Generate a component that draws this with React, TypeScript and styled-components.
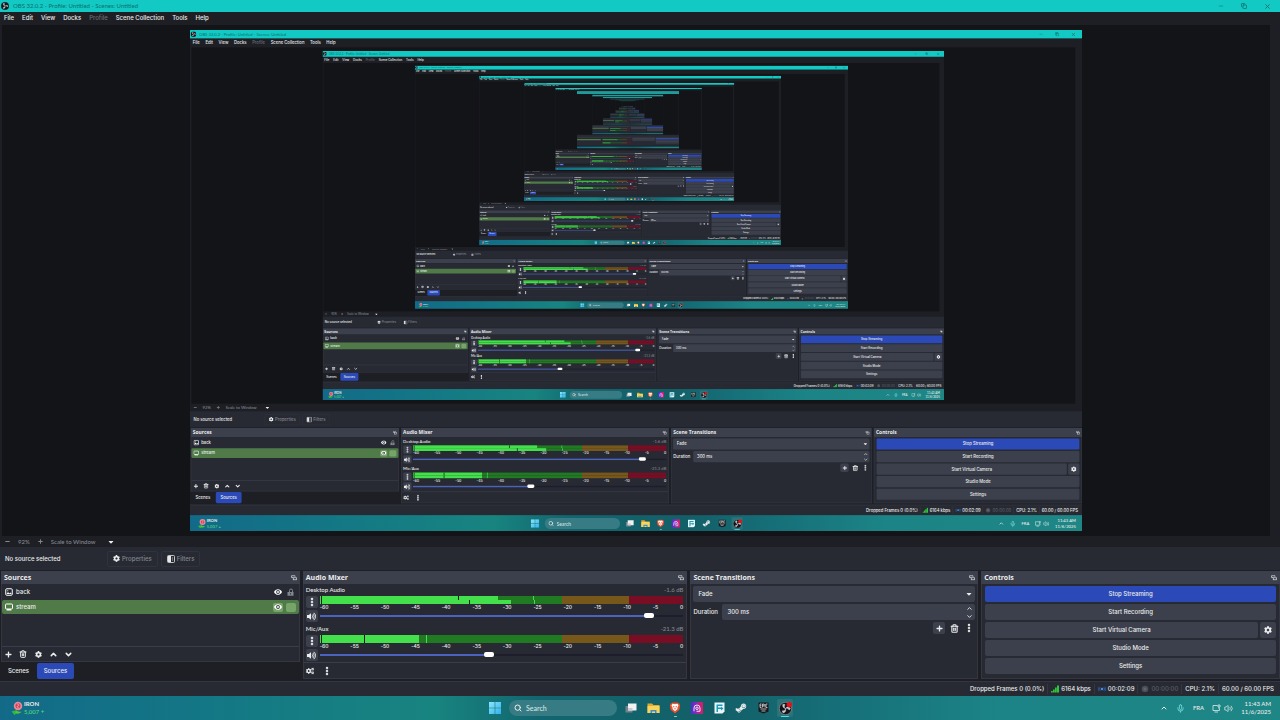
import React, { useId } from 'react';
import styled, { createGlobalStyle, css } from 'styled-components';
import { FaPlus, FaMinus, FaCog, FaCogs, FaVolumeUp, FaCaretDown, FaSteamSymbol } from 'react-icons/fa';
import { ChevronUp, ChevronDown, Trash2, EllipsisVertical, Search, Mic, Volume2, X, Copy, Minus } from 'lucide-react';

const PREVIEW_SCALE = 0.697;
/* From this depth on a capture is too small for text, so only its blocks are drawn. */
const DETAIL_DEPTH = 7;
const MAX_DEPTH = 13;

const color = {
  accent: '#12cac3',
  window: '#1d1f25',
  panel: '#272a33',
  control: '#3c404c',
  canvas: '#131418',
  blue: '#2b4ab8',
  text: '#eceded',
  muted: '#85878e',
};

const GlobalStyle = createGlobalStyle`
  *, *::before, *::after { box-sizing: border-box; }
  body { margin: 0; background: ${color.window}; }
  button, input, select {
    font: inherit; color: inherit; background: none; border: 0; margin: 0; padding: 0;
    min-width: 0; outline: 0; appearance: none;
  }
  svg { display: block; flex: none; }
  ul { list-style: none; margin: 0; padding: 0; }
`;

/* ---------- Desktop shell ---------- */

const DesktopFrame = styled.div`
  display: flex;
  flex-direction: column;
  width: 100%;
  min-height: 100vh;
  overflow: hidden;
  background: ${color.window};
  color: ${color.text};
  font-family: Inter, 'Open Sans', sans-serif;
  font-size: 6px;
  font-weight: 500;
  line-height: 10px;
  white-space: nowrap;
`;

const TitleBar = styled.header<{ $thick?: boolean }>`
  display: flex;
  align-items: center;
  gap: 4px;
  height: ${(p) => (p.$thick ? 38 : 12)}px;
  padding: 0 9px 0 1px;
  background: ${(p) => (p.$thick ? '#1c9c9b' : color.accent)};
  color: #0b6e6f;
`;

const TitleText = styled.span`
  flex: 1;
  font-family: Lato, sans-serif;
  font-size: 6px;
  font-weight: 400;
`;

const WindowButtons = styled.div`
  display: flex;
  gap: 15px;
`;

const WindowButton = styled.button`
  display: grid;
  place-items: center;
  width: 8px;
  height: 10px;
`;

const MenuBar = styled.nav`
  display: flex;
  gap: 8px;
  height: 13px;
  padding: 1px 4px 2px;
`;

const MenuItem = styled.button<{ $dim?: boolean }>`
  color: ${(p) => (p.$dim ? '#6c6e74' : color.text)};
`;

/* ---------- Preview ---------- */

const PreviewRow = styled.main`
  flex: 1;
  display: flex;
  padding: 0 10px 0 2px;
`;

const PreviewCanvas = styled.div`
  flex: 1;
  display: flex;
  align-items: center;
  justify-content: center;
  background: ${color.canvas};
`;

const PreviewSlot = styled.div`
  width: ${PREVIEW_SCALE * 100}vw;
  height: ${PREVIEW_SCALE * 100}vh;
  overflow: hidden;
`;

const CapturedScreen = styled.div`
  width: 100vw;
  height: 100vh;
  transform: scale(${PREVIEW_SCALE});
  transform-origin: 0 0;
`;

const ZoomBar = styled.div`
  display: flex;
  align-items: center;
  gap: 8px;
  height: 11px;
  padding: 0 5px;
  color: ${color.muted};
  font-family: Lato, sans-serif;
`;

const ZoomButton = styled.button`
  display: grid;
  place-items: center;
  width: 5px;
`;

const ScaleSelect = styled.select`
  width: 48px;
`;

const SelectWrap = styled.span`
  display: flex;
  align-items: center;
  gap: 8px;
  & > svg { color: ${color.text}; }
`;

/* ---------- Source context bar ---------- */

const ContextBar = styled.div`
  display: flex;
  align-items: center;
  height: 23px;
  padding: 0 5px;
  background: ${color.panel};
`;

const ContextLabel = styled.span`
  width: 102px;
`;

const ContextButton = styled.button`
  display: flex;
  align-items: center;
  gap: 2px;
  height: 16px;
  margin-right: 3px;
  padding: 0 5px;
  border: 1px solid #30333d;
  border-radius: 2px;
  color: ${color.muted};
  & > svg { color: ${color.text}; }
`;

/* ---------- Docks ---------- */

const DockRow = styled.div`
  display: grid;
  grid-template-columns: 299fr 385fr 288fr 299fr;
  gap: 3px;
  height: 111px;
  padding: 1px 0 3px 1px;
`;

const Dock = styled.section`
  display: flex;
  flex-direction: column;
  min-width: 0;
`;

const DockHeader = styled.h2`
  display: flex;
  align-items: center;
  justify-content: space-between;
  height: 13px;
  margin: 0;
  padding: 0 3px;
  background: ${color.control};
  font-family: 'Open Sans', sans-serif;
  font-size: 7px;
  font-weight: 700;
  line-height: 10px;
`;

const DockBody = styled.div`
  flex: 1;
  display: flex;
  flex-direction: column;
  border: 1px solid #343742;
  border-top: 0;
  background: ${color.panel};
`;

const IconButton = styled.button<{ $raised?: boolean }>`
  display: grid;
  place-items: center;
  width: 12px;
  height: 12px;
  border-radius: 2px;
  ${(p) => p.$raised && css`background: ${color.control};`}
`;

const SourceList = styled.ul`
  flex: 1;
`;

const SourceRow = styled.li<{ $selected?: boolean }>`
  display: flex;
  align-items: center;
  gap: 3px;
  height: 15px;
  padding: 0 3px;
  ${(p) => p.$selected && css`height: 14px; margin-top: 1px; border-radius: 2px; background: #507b49;`}
`;

const SourceName = styled.span`
  flex: 1;
`;

const SourceToggle = styled.button<{ $tint?: boolean }>`
  display: grid;
  place-items: center;
  width: 10px;
  height: 9px;
  border-radius: 2px;
  ${(p) => p.$tint && css`background: #77a468;`}
`;

const SourceTools = styled.div`
  display: flex;
  align-items: center;
  gap: 3px;
  height: 15px;
  border-top: 1px solid #3a3e49;
`;

const Tabs = styled.div`
  display: flex;
  gap: 1px;
  height: 17px;
  padding-top: 1px;
`;

const Tab = styled.button<{ $active?: boolean }>`
  width: ${(p) => (p.$active ? 37 : 35)}px;
  height: 16px;
  border-radius: 2px;
  background: ${(p) => (p.$active ? color.blue : color.window)};
`;

/* ---------- Mixer ---------- */

const Channel = styled.div`
  display: grid;
  grid-template-columns: 12px 1fr;
  column-gap: 2px;
  height: 39px;
  padding: 1px 3px 0 2px;
`;

const ChannelTitle = styled.div`
  grid-column: 1 / -1;
  display: flex;
  justify-content: space-between;
  height: 10px;
  font-family: Lato, sans-serif;
  & > output { color: ${color.muted}; }
`;

const ChannelButtons = styled.div`
  display: flex;
  flex-direction: column;
  gap: 2px;
`;

const Meters = styled.div`
  display: flex;
  flex-direction: column;
  min-width: 0;
`;

const MeterBar = styled.div`
  position: relative;
  height: 4px;
  background: linear-gradient(90deg, #1f7a22 0 66.8%, #77571a 66.8% 85.1%, #780d24 85.1%);
`;

const MeterLevel = styled.div`
  height: 100%;
  background: #44e04c;
`;

const MeterMark = styled.i<{ $dark?: boolean }>`
  position: absolute;
  top: 0;
  width: 1px;
  height: 100%;
  background: ${(p) => (p.$dark ? '#0b1a0c' : '#44e04c')};
`;

const Scale = styled.div`
  display: flex;
  justify-content: space-between;
  height: 7px;
  font-size: 5px;
  line-height: 7px;
`;

const Fader = styled.input`
  width: 100%;
  height: 9px;
  background: center / 100% 2px no-repeat;
  &::-webkit-slider-runnable-track { height: 5px; }
  &::-webkit-slider-thumb {
    appearance: none;
    width: 10px;
    height: 5px;
    border-radius: 2px;
    background: #fff;
  }
`;

const MixerTools = styled.div`
  display: flex;
  align-items: center;
  gap: 5px;
  height: 16px;
  margin-top: auto;
  border-top: 1px solid #3a3e49;
`;

/* ---------- Transitions and controls ---------- */

const Stack = styled.div`
  display: flex;
  flex-direction: column;
  gap: 2px;
  padding: 2px 2px;
`;

const Line = styled.div`
  display: flex;
  gap: 2px;
  & > label { width: 27px; line-height: 16px; }
`;

const Field = styled.div`
  flex: 1 0 auto;
  display: flex;
  align-items: center;
  height: 16px;
  padding: 0 2px 0 5px;
  border-radius: 2px;
  background: ${color.control};
  & > select, & > input { flex: 1; }
`;

const Spinner = styled.span`
  display: flex;
  flex-direction: column;
  gap: 1px;
`;

const TransitionTools = styled.div`
  display: flex;
  justify-content: flex-end;
  gap: 3px;
`;

const ControlStack = styled(Stack)`
  padding: 2px 3px;
`;

const ControlButton = styled.button<{ $primary?: boolean; $square?: boolean }>`
  display: grid;
  place-items: center;
  flex: ${(p) => (p.$square ? '0 0 16px' : '1')};
  height: 16px;
  border-radius: 2px;
  background: ${(p) => (p.$primary ? color.blue : color.control)};
`;

/* ---------- Status bar ---------- */

const StatusBar = styled.footer`
  display: flex;
  justify-content: flex-end;
  height: 15px;
  padding: 2px 3px;
  border-top: 1px solid #343742;
  background: ${color.panel};
`;

const StatusItem = styled.span<{ $dim?: boolean }>`
  display: flex;
  align-items: center;
  gap: 2px;
  padding: 0 3px;
  color: ${(p) => (p.$dim ? '#5b5e68' : color.text)};
  & + & { border-left: 1px solid #343742; }
`;

/* ---------- Taskbar ---------- */

const Taskbar = styled.footer`
  display: grid;
  grid-template-columns: 1fr auto 1fr;
  align-items: center;
  height: 24px;
  padding: 0 9px;
  background: linear-gradient(90deg, #126a88 0%, #147a84 20%, #188480 34%, #12666f 42%, #135f68 56%, #167079 66%, #1c8486 78%, #1f8686 100%);
  font-family: Lato, sans-serif;
`;

const Widget = styled.button`
  display: flex;
  align-items: center;
  gap: 1px;
  padding-left: 2px;
  line-height: 8px;
  text-align: left;
  justify-self: start;
`;

const WidgetLines = styled.span`
  display: flex;
  flex-direction: column;
  & > b { font-weight: 700; }
  & > span { color: #54dc7c; }
`;

const AppRow = styled.div`
  display: flex;
  align-items: center;
  gap: 6px;
`;

const AppButton = styled.button<{ $state?: 'open' | 'active' }>`
  position: relative;
  display: grid;
  place-items: center;
  width: 16px;
  height: 18px;
  border-radius: 2px;
  ${(p) => p.$state === 'active' && css`background: #2b7279;`}
  ${(p) => p.$state && css`
    &::after {
      content: '';
      position: absolute;
      bottom: 0;
      width: ${p.$state === 'active' ? 8 : 3}px;
      height: 1px;
      border-radius: 1px;
      background: ${p.$state === 'active' ? '#4fe0e6' : '#9cc6c8'};
    }
  `}
`;

const SearchBox = styled.label`
  display: flex;
  align-items: center;
  gap: 4px;
  width: 108px;
  height: 16px;
  padding: 0 5px;
  border-radius: 8px;
  background: #377c84;
  font-size: 7px;
  & > input { flex: 1; }
  & > input::placeholder { color: #d5e4e4; opacity: 1; }
`;

const Tray = styled.div`
  display: flex;
  align-items: center;
  justify-content: flex-end;
  gap: 8px;
`;

const TrayPair = styled.span`
  display: flex;
  gap: 3px;
`;

const Clock = styled.time`
  line-height: 8px;
  text-align: right;
`;

/* ---------- Drawings ---------- */

const BLADE = 'M7 4.5c-1 4.2 1.2 7 5 7.4-2.8-1.6-2.6-4.8-.8-7C9.8 4 8.2 3.9 7 4.5z';

const ObsMark = ({ size = 8, live }: { size?: number; live?: boolean }) => (
  <svg width={size} height={size} viewBox="0 0 24 24">
    <circle cx="12" cy="12" r="11.5" fill="#14141a" stroke={live ? '#a9aeb0' : '#14141a'} />
    <g fill="#c9cdd0" stroke="#c9cdd0" strokeWidth=".8">
      <path d={BLADE} />
      <path d={BLADE} transform="rotate(120 12 12)" />
      <path d={BLADE} transform="rotate(240 12 12)" />
    </g>
    {live && <circle cx="19" cy="5" r="5" fill="#e0151b" />}
  </svg>
);

const FloatIcon = () => (
  <svg width="6" height="6" viewBox="0 0 12 12" fill="none" stroke="#d4d5d9" strokeWidth="1.5">
    <path d="M8 3.500V1.500H1V5h3" />
    <rect x="4.500" y="5.500" width="6.500" height="4" />
  </svg>
);

const ImageIcon = () => (
  <svg width="8" height="8" viewBox="0 0 16 16">
    <rect x="1.500" y="1.500" width="13" height="13" rx="2" fill="none" stroke="#fff" strokeWidth="2" />
    <path d="M3 12l3-4 2.500 3L11 9l2.500 3z" fill="#fff" />
    <circle cx="5.500" cy="5.500" r="1.200" fill="#fff" />
  </svg>
);

const MonitorIcon = () => (
  <svg width="8" height="8" viewBox="0 0 16 16">
    <rect x="1" y="2" width="14" height="10" rx="2" fill="none" stroke="#fff" strokeWidth="2" />
    <path d="M4 12h8l1 3H3z" fill="#fff" />
  </svg>
);

const EyeIcon = () => (
  <svg width="8" height="8" viewBox="0 0 16 16">
    <path d="M0 8c3-7.500 13-7.500 16 0-3 7.500-13 7.500-16 0z" fill="#fff" />
    <circle cx="8" cy="8" r="3.800" fill="#3a3e49" />
    <circle cx="8" cy="8" r="1.900" fill="#fff" />
  </svg>
);

const UnlockIcon = () => (
  <svg width="7" height="8" viewBox="0 0 14 16">
    <path d="M5 8V5a3 3 0 0 1 6 0v3" fill="none" stroke="#83858c" strokeWidth="2" />
    <rect x="1" y="8" width="12" height="7.500" fill="#83858c" />
    <path d="M7 10v3" stroke="#272a33" strokeWidth="1.500" />
  </svg>
);

const FilterIcon = () => (
  <svg width="8" height="8" viewBox="0 0 16 16">
    <rect x="1" y="1" width="14" height="14" rx="2" fill="none" stroke="#e8e8ea" strokeWidth="1.600" />
    <path d="M2 2h6v12H2z" fill="#e8e8ea" />
    <path d="M11 4v8" stroke="#85878e" strokeWidth="1.500" />
  </svg>
);

const SignalIcon = () => (
  <svg width="8" height="8" viewBox="0 0 16 16" fill="#2fc43a">
    <path d="M0 12h3.500v3H0zM4 9h3.500v6H4zM8 5h3.500v10H8zM12 1h4v14h-4z" />
  </svg>
);

const StreamIcon = () => (
  <svg width="8" height="8" viewBox="0 0 16 16">
    <circle cx="8" cy="8" r="2.500" fill="#4a8de8" />
    <path d="M4.500 4.500a5 5 0 0 0 0 7M11.500 4.500a5 5 0 0 1 0 7M2 3.500a8 8 0 0 0 0 9M14 3.500a8 8 0 0 1 0 9" fill="none" stroke="#2b5fae" strokeWidth="1.600" />
  </svg>
);

const RecordIcon = () => (
  <svg width="8" height="8" viewBox="0 0 16 16">
    <circle cx="8" cy="8" r="6.500" fill="#4c4f59" />
    <circle cx="8" cy="8" r="3" fill="#60636d" />
  </svg>
);

const RoseIcon = () => (
  <svg width="12" height="14" viewBox="0 0 24 28">
    <path d="M1 21l7-2 4 5-5 4z" fill="#37b53f" />
    <path d="M9 17c3 4 7 5 12 4-2 4-8 6-12 3z" fill="#4dc936" />
    <circle cx="14" cy="10" r="8.500" fill="#e8889a" />
    <circle cx="14" cy="9.500" r="5" fill="#cf4358" />
    <path d="M12 6c4 0 5 3 2 4s-2 3 1 3" stroke="#f4b4bd" strokeWidth="1.500" fill="none" />
  </svg>
);

const StartIcon = () => (
  <svg width="12" height="12" viewBox="0 0 24 24">
    <defs>
      <linearGradient id="start-tile" x1="0" y1="0" x2="1" y2="1">
        <stop offset="0" stopColor="#8be6fb" />
        <stop offset="1" stopColor="#2fb1ee" />
      </linearGradient>
    </defs>
    <path d="M0 0h11.400v11.400H0zM12.600 0H24v11.400H12.600zM0 12.600h11.400V24H0zM12.600 12.600H24V24H12.600z" fill="url(#start-tile)" />
  </svg>
);

const TaskViewIcon = () => (
  <svg width="12" height="12" viewBox="0 0 24 24">
    <path d="M1 8h14v13H1z" fill="#74828a" />
    <path d="M6 3h17v14H6z" fill="#f1f1f1" />
    <path d="M6 12h9v5H6z" fill="#c9cccf" />
  </svg>
);

const FolderIcon = () => (
  <svg width="13" height="12" viewBox="0 0 26 24">
    <path d="M1 3h9l3 3h12v16H1z" fill="#e3a92a" />
    <path d="M1 8h24v14H1z" fill="#f9d45c" />
    <path d="M7 22v-6h12v6h-3v-3h-6v3z" fill="#3f8ccb" />
  </svg>
);

const BraveIcon = () => (
  <svg width="12" height="12" viewBox="0 0 24 24">
    <path d="M7 1h10l2 2.200 2-.2 1.200 4-1.500 8.500L12 23l-8.700-7.500L1.800 7 3 3l2 .2z" fill="#f0502a" />
    <path d="M12 4.500l5-.8 2 3.300-2.500 5 .5 2-5 4.500L7 14l.5-2L5 7l2-3.300z" fill="#fff" />
    <path d="M8 7.500l3 1-1 3 2 2 2-2-1-3 3-1-2 5-2 3-2-3z" fill="#f0502a" />
  </svg>
);

const SwirlIcon = () => (
  <svg width="12" height="12" viewBox="0 0 24 24">
    <defs>
      <linearGradient id="swirl-tile" x1="0" y1="0" x2="1" y2="0">
        <stop offset="0" stopColor="#4331d4" />
        <stop offset=".55" stopColor="#9c2aa8" />
        <stop offset="1" stopColor="#e3195e" />
      </linearGradient>
    </defs>
    <rect width="24" height="24" rx="2" fill="url(#swirl-tile)" />
    <path d="M6 18.500v-6.500a6 6 0 1 1 12 0v6.500h-7" fill="none" stroke="#eee2f7" strokeWidth="2" />
    <circle cx="12" cy="12.500" r="2.500" fill="none" stroke="#eee2f7" strokeWidth="2" />
  </svg>
);

const ShareTileIcon = () => (
  <svg width="11" height="12" viewBox="0 0 22 24">
    <path d="M1 1h20v18l-4 4H1z" fill="#e9f7fa" />
    <path d="M5 5h12v3H8v3h6V9l5 4-5 4v-3H8v6H5z" fill="#1b9cb8" />
  </svg>
);

const EpicIcon = () => (
  <svg width="11" height="12" viewBox="0 0 22 24">
    <path d="M1 1h20v18l-10 4-10-4z" fill="#17191c" />
    <path d="M4 4h3M4 4v7h3M4 7.500h3M9 11V4h3v4H9M14 4v7M19 4h-3v7h3M5 14h12M7 18h8" stroke="#dfe2e3" strokeWidth="1.500" fill="none" />
  </svg>
);

const NetworkIcon = () => (
  <svg width="9" height="9" viewBox="0 0 18 18" fill="none" stroke="#e4f1f1" strokeWidth="1.500">
    <path d="M11 3H2v10h13V9M5 16h7" />
    <path d="M12 2h4v4h-4zM14 6v4" />
  </svg>
);

/* ---------- Parts ---------- */

type MeterData = { level: number; peak: number; hold: number };
type ChannelData = { name: string; db: string; fader: number; meters: MeterData[] };

const CHANNELS: ChannelData[] = [
  {
    name: 'Desktop Audio',
    db: '-1.6 dB',
    fader: 918,
    meters: [
      { level: 49, peak: 38, hold: 58.5 },
      { level: 52.5, peak: 41, hold: 59 },
    ],
  },
  {
    name: 'Mic/Aux',
    db: '-21.3 dB',
    fader: 464,
    meters: [
      { level: 27.3, peak: 12.2, hold: 29.2 },
      { level: 27.3, peak: 12.2, hold: 29.2 },
    ],
  },
];

const MARKS = [-60, -55, -50, -45, -40, -35, -30, -25, -20, -15, -10, -5, 0];

function MeterPair({ data }: { data: MeterData[] }) {
  return (
    <>
      {data.map((m, i) => (
        <MeterBar key={i}>
          <MeterLevel style={{ width: `${m.level}%` }} />
          <MeterMark $dark style={{ left: 1 }} />
          <MeterMark $dark style={{ left: `${m.peak}%` }} />
          <MeterMark style={{ left: `${m.hold}%` }} />
        </MeterBar>
      ))}
    </>
  );
}

function MixerChannel({ data }: { data: ChannelData }) {
  const id = useId();
  return (
    <Channel>
      <ChannelTitle>
        <label htmlFor={id}>{data.name}</label>
        <output>{data.db}</output>
      </ChannelTitle>
      <ChannelButtons>
        <IconButton $raised aria-label={`${data.name} options`}>
          <EllipsisVertical size={10} strokeWidth={4} />
        </IconButton>
        <IconButton $raised aria-label={`Mute ${data.name}`}>
          <FaVolumeUp size={9} />
        </IconButton>
      </ChannelButtons>
      <Meters>
        <MeterPair data={data.meters} />
        <Scale>
          {MARKS.map((m) => (
            <span key={m}>{m}</span>
          ))}
        </Scale>
        <Fader
          id={id}
          type="range"
          min={0}
          max={1000}
          defaultValue={data.fader}
          style={{
            backgroundImage: `linear-gradient(90deg, #4b63bd ${data.fader / 10}%, #1c1f2b ${data.fader / 10}%)`,
          }}
        />
      </Meters>
    </Channel>
  );
}

function DockTitle({ children }: { children: React.ReactNode }) {
  return (
    <DockHeader>
      {children}
      <FloatIcon />
    </DockHeader>
  );
}

function SourcesDock() {
  return (
    <Dock>
      <DockTitle>Sources</DockTitle>
      <DockBody>
        <SourceList>
          <SourceRow>
            <ImageIcon />
            <SourceName>back</SourceName>
            <SourceToggle aria-label="Toggle back visibility"><EyeIcon /></SourceToggle>
            <SourceToggle aria-label="Lock back"><UnlockIcon /></SourceToggle>
          </SourceRow>
          <SourceRow $selected>
            <MonitorIcon />
            <SourceName>stream</SourceName>
            <SourceToggle $tint aria-label="Toggle stream visibility"><EyeIcon /></SourceToggle>
            <SourceToggle $tint aria-label="Lock stream" />
          </SourceRow>
        </SourceList>
        <SourceTools>
          <IconButton aria-label="Add source"><FaPlus size={7} /></IconButton>
          <IconButton aria-label="Remove source"><Trash2 size={8} strokeWidth={3} /></IconButton>
          <IconButton aria-label="Source settings"><FaCog size={7} /></IconButton>
          <IconButton aria-label="Move source up"><ChevronUp size={9} strokeWidth={4} /></IconButton>
          <IconButton aria-label="Move source down"><ChevronDown size={9} strokeWidth={4} /></IconButton>
        </SourceTools>
      </DockBody>
      <Tabs>
        <Tab>Scenes</Tab>
        <Tab $active>Sources</Tab>
      </Tabs>
    </Dock>
  );
}

function MixerDock() {
  return (
    <Dock>
      <DockTitle>Audio Mixer</DockTitle>
      <DockBody>
        {CHANNELS.map((c) => (
          <MixerChannel key={c.name} data={c} />
        ))}
        <MixerTools>
          <IconButton aria-label="Advanced audio settings"><FaCogs size={8} /></IconButton>
          <IconButton aria-label="Mixer menu"><EllipsisVertical size={10} strokeWidth={4} /></IconButton>
        </MixerTools>
      </DockBody>
    </Dock>
  );
}

function TransitionsDock() {
  const id = useId();
  return (
    <Dock>
      <DockTitle>Scene Transitions</DockTitle>
      <DockBody>
        <Stack>
          <Field>
            <select aria-label="Transition">
              <option>Fade</option>
            </select>
            <FaCaretDown size={8} />
          </Field>
          <Line>
            <label htmlFor={id}>Duration</label>
            <Field>
              <input id={id} defaultValue="300 ms" />
              <Spinner>
                <ChevronUp size={7} strokeWidth={3} />
                <ChevronDown size={7} strokeWidth={3} />
              </Spinner>
            </Field>
          </Line>
          <TransitionTools>
            <IconButton $raised aria-label="Add transition"><FaPlus size={7} /></IconButton>
            <IconButton aria-label="Remove transition"><Trash2 size={9} strokeWidth={3} /></IconButton>
            <IconButton aria-label="Transition menu"><EllipsisVertical size={10} strokeWidth={4} /></IconButton>
          </TransitionTools>
        </Stack>
      </DockBody>
    </Dock>
  );
}

function ControlsDock() {
  return (
    <Dock>
      <DockTitle>Controls</DockTitle>
      <DockBody>
        <ControlStack>
          <Line><ControlButton $primary>Stop Streaming</ControlButton></Line>
          <Line><ControlButton>Start Recording</ControlButton></Line>
          <Line>
            <ControlButton>Start Virtual Camera</ControlButton>
            <ControlButton $square aria-label="Virtual camera settings"><FaCog size={8} /></ControlButton>
          </Line>
          <Line><ControlButton>Studio Mode</ControlButton></Line>
          <Line><ControlButton>Settings</ControlButton></Line>
        </ControlStack>
      </DockBody>
    </Dock>
  );
}

function WindowsTaskbar() {
  return (
    <Taskbar>
      <Widget>
        <RoseIcon />
        <WidgetLines>
          <b>IRON</b>
          <span>5,007 +</span>
        </WidgetLines>
      </Widget>
      <AppRow>
        <AppButton aria-label="Start"><StartIcon /></AppButton>
        <SearchBox>
          <Search size={8} strokeWidth={3} />
          <input type="text" placeholder="Search" aria-label="Search" />
        </SearchBox>
        <AppButton aria-label="Task view"><TaskViewIcon /></AppButton>
        <AppButton aria-label="File Explorer"><FolderIcon /></AppButton>
        <AppButton aria-label="Brave" $state="open"><BraveIcon /></AppButton>
        <AppButton aria-label="Recorder"><SwirlIcon /></AppButton>
        <AppButton aria-label="Transfer"><ShareTileIcon /></AppButton>
        <AppButton aria-label="Steam"><FaSteamSymbol size={12} /></AppButton>
        <AppButton aria-label="Epic Games"><EpicIcon /></AppButton>
        <AppButton aria-label="OBS Studio" $state="active"><ObsMark size={13} live /></AppButton>
      </AppRow>
      <Tray>
        <ChevronUp size={8} strokeWidth={3} />
        <Mic size={9} strokeWidth={2} color="#7fe6ea" />
        <span>FRA</span>
        <TrayPair>
          <NetworkIcon />
          <Volume2 size={9} strokeWidth={2} />
        </TrayPair>
        <Clock>
          11:43 AM
          <br />
          11/6/2025
        </Clock>
      </Tray>
    </Taskbar>
  );
}

const MENUS = ['File', 'Edit', 'View', 'Docks', 'Profile', 'Scene Collection', 'Tools', 'Help'];

function Preview({ depth }: { depth: number }) {
  const Next = depth + 1 < DETAIL_DEPTH ? Desktop : Miniature;
  return (
    <PreviewRow>
      <PreviewCanvas>
        <PreviewSlot>
          {depth < MAX_DEPTH && (
            <CapturedScreen>
              <Next depth={depth + 1} />
            </CapturedScreen>
          )}
        </PreviewSlot>
      </PreviewCanvas>
    </PreviewRow>
  );
}

function Miniature({ depth }: { depth: number }) {
  return (
    <DesktopFrame>
      <TitleBar $thick />
      <Preview depth={depth} />
      <ContextBar />
      <DockRow>
        <Dock>
          <DockHeader />
          <DockBody>
            <SourceRow />
            <SourceRow $selected />
          </DockBody>
        </Dock>
        <Dock>
          <DockHeader />
          <DockBody>
            {CHANNELS.map((c) => (
              <Channel key={c.name}>
                <ChannelTitle />
                <ChannelButtons />
                <Meters>
                  <MeterPair data={c.meters} />
                </Meters>
              </Channel>
            ))}
          </DockBody>
        </Dock>
        <Dock>
          <DockHeader />
          <DockBody>
            <Stack>
              <Field />
              <Field />
            </Stack>
          </DockBody>
        </Dock>
        <Dock>
          <DockHeader />
          <DockBody>
            <ControlStack>
              <Line><ControlButton as="div" $primary /></Line>
              <Line><ControlButton as="div" /></Line>
              <Line><ControlButton as="div" /></Line>
              <Line><ControlButton as="div" /></Line>
            </ControlStack>
          </DockBody>
        </Dock>
      </DockRow>
      <StatusBar />
      <Taskbar />
    </DesktopFrame>
  );
}

function Desktop({ depth }: { depth: number }) {
  return (
    <DesktopFrame>
      <TitleBar>
        <ObsMark />
        <TitleText>OBS 32.0.2 - Profile: Untitled - Scenes: Untitled</TitleText>
        <WindowButtons>
          <WindowButton aria-label="Minimize"><Minus size={6} strokeWidth={2} /></WindowButton>
          <WindowButton aria-label="Restore"><Copy size={6} strokeWidth={3} /></WindowButton>
          <WindowButton aria-label="Close"><X size={7} strokeWidth={3} /></WindowButton>
        </WindowButtons>
      </TitleBar>
      <MenuBar>
        {MENUS.map((m) => (
          <MenuItem key={m} $dim={m === 'Profile'}>{m}</MenuItem>
        ))}
      </MenuBar>
      <Preview depth={depth} />
      <ZoomBar>
        <ZoomButton aria-label="Zoom out"><FaMinus size={5} /></ZoomButton>
        <span>92%</span>
        <ZoomButton aria-label="Zoom in"><FaPlus size={5} /></ZoomButton>
        <SelectWrap>
          <ScaleSelect aria-label="Preview scale">
            <option>Scale to Window</option>
          </ScaleSelect>
          <FaCaretDown size={8} />
        </SelectWrap>
      </ZoomBar>
      <ContextBar>
        <ContextLabel>No source selected</ContextLabel>
        <ContextButton><FaCog size={7} />Properties</ContextButton>
        <ContextButton><FilterIcon />Filters</ContextButton>
      </ContextBar>
      <DockRow>
        <SourcesDock />
        <MixerDock />
        <TransitionsDock />
        <ControlsDock />
      </DockRow>
      <StatusBar>
        <StatusItem>Dropped Frames 0 (0.0%)</StatusItem>
        <StatusItem><SignalIcon />6164 kbps</StatusItem>
        <StatusItem><StreamIcon />00:02:09</StatusItem>
        <StatusItem $dim><RecordIcon />00:00:00</StatusItem>
        <StatusItem>CPU: 2.1%</StatusItem>
        <StatusItem>60.00 / 60.00 FPS</StatusItem>
      </StatusBar>
      <WindowsTaskbar />
    </DesktopFrame>
  );
}

export default function App() {
  return (
    <>
      <GlobalStyle />
      <Desktop depth={0} />
    </>
  );
}
